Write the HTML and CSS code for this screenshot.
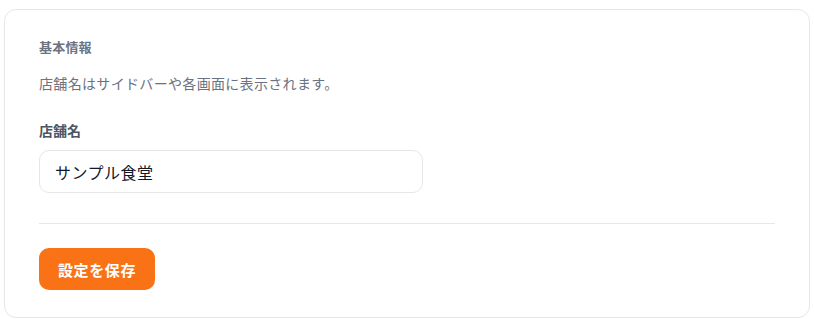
FILE: index.html
```html
<!DOCTYPE html>
<html lang="ja">
<head>
<meta charset="utf-8">
<link rel="stylesheet" href="styles.css">
</head>
<body>
<section class="card">
  <h2 class="section-title">基本情報</h2>
  <p class="section-desc">店舗名はサイドバーや各画面に表示されます。</p>
  <div class="field">
    <label class="field-label" for="store">店舗名</label>
    <input class="field-input" id="store" type="text" value="サンプル食堂">
  </div>
  <hr class="divider">
  <div class="actions">
    <button class="btn-primary" type="button">設定を保存</button>
  </div>
</section>
</body>
</html>
```

FILE: styles.css
```css
* { box-sizing: border-box; }
html, body { background: #ffffff; }
body {
  margin: 9px 4px 0 4px;
  font-family: "Noto Sans CJK JP", "Noto Sans", sans-serif;
}
.card {
  width: 806px;
  border: 1px solid #e5e7eb;
  border-radius: 12px;
  padding: 27px 34px 27px 34px;
  background: #fff;
}
.section-title {
  margin: 0;
  font-size: 13px;
  line-height: 20px;
  font-weight: 700;
  color: #6b7280;
  letter-spacing: 0.2px;
}
.section-desc {
  margin: 16px 0 0;
  font-size: 14px;
  line-height: 20px;
  color: #6b7280;
  letter-spacing: 0.33px;
}
.field {
  margin-top: 27px;
  display: flex;
  flex-direction: column;
  gap: 10px;
}
.field-label {
  font-size: 14px;
  line-height: 20px;
  font-weight: 700;
  color: #4b5563;
}
.field-input {
  width: 384px;
  height: 43px;
  border: 1px solid #e5e7eb;
  border-radius: 10px;
  padding: 0 15px;
  font-family: inherit;
  font-size: 16px;
  letter-spacing: 0.5px;
  color: #111827;
  background: #fff;
  outline: none;
}
.divider {
  margin: 30px 0 0;
  border: 0;
  border-top: 1px solid #e5e7eb;
  height: 0;
}
.actions {
  margin-top: 24px;
  display: flex;
}
.btn-primary {
  height: 42px;
  width: 116px;
  border: 0;
  border-radius: 10px;
  background: #f97316;
  color: #fff;
  font-family: inherit;
  font-size: 15px;
  letter-spacing: 0.6px;
  font-weight: 700;
  padding: 0;
}
```
